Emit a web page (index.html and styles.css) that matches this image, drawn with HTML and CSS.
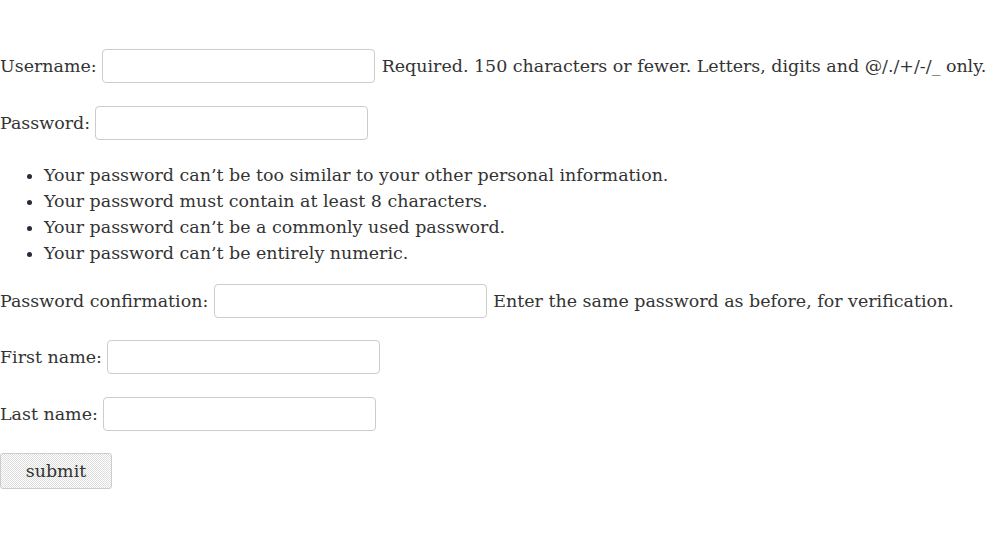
FILE: index.html
```html
<!DOCTYPE html>
<html>
<head>
<meta charset="utf-8">
<link rel="stylesheet" href="styles.css">
</head>
<body>
<form class="form">
  <div class="row row-first">
    <label class="label" for="u">Username:</label>
    <input class="field" id="u" type="text">
    <span class="help">Required. 150 characters or fewer. Letters, digits and @/./+/-/_ only.</span>
  </div>
  <div class="row">
    <label class="label" for="p">Password:</label>
    <input class="field" id="p" type="password">
  </div>
  <ul class="rules">
    <li>Your password can’t be too similar to your other personal information.</li>
    <li>Your password must contain at least 8 characters.</li>
    <li>Your password can’t be a commonly used password.</li>
    <li>Your password can’t be entirely numeric.</li>
  </ul>
  <div class="row row-after-list">
    <label class="label" for="p2">Password confirmation:</label>
    <input class="field" id="p2" type="password">
    <span class="help">Enter the same password as before, for verification.</span>
  </div>
  <div class="row">
    <label class="label" for="f">First name:</label>
    <input class="field" id="f" type="text">
  </div>
  <div class="row">
    <label class="label" for="l">Last name:</label>
    <input class="field" id="l" type="text">
  </div>
  <div class="row">
    <button class="submit" type="submit">submit</button>
  </div>
</form>
</body>
</html>
```
FILE: styles.css
```css
html, body {
  margin: 0;
  padding: 0;
  background: #fff;
}
body {
  font-family: "DejaVu Serif", serif;
  font-size: 17.45px;
  color: #333;
}
.form {
  display: flex;
  flex-direction: column;
  padding-top: 49px;
}
.row {
  display: flex;
  align-items: center;
  height: 34px;
  margin-bottom: 23px;
  white-space: nowrap;
}
.label {
  margin-right: 5.4px;
}
.field {
  box-sizing: border-box;
  width: 273px;
  height: 34px;
  border: 1px solid #ccc;
  border-radius: 4px;
  background: #fff;
  margin: 0;
  padding: 0 8px;
  font: inherit;
}
.help {
  margin-left: 6.6px;
}
.rules {
  margin: -1px 0 0 0;
  padding: 0 0 0 44px;
  line-height: 26px;
}
.rules li {
  padding: 0;
}
.rules li::marker {
  color: #2a2a3a;
}
.row-after-list {
  margin-top: 18px;
  margin-bottom: 22px;
}
.submit {
  box-sizing: border-box;
  width: 112px;
  height: 36px;
  margin: 0;
  border: 1px solid #ccc;
  border-radius: 3px;
  font: inherit;
  color: #333;
  background-color: #fff;
  background-image: repeating-conic-gradient(#ddd 0 25%, #fff 0 50%);
  background-size: 2px 2px;
}
```
